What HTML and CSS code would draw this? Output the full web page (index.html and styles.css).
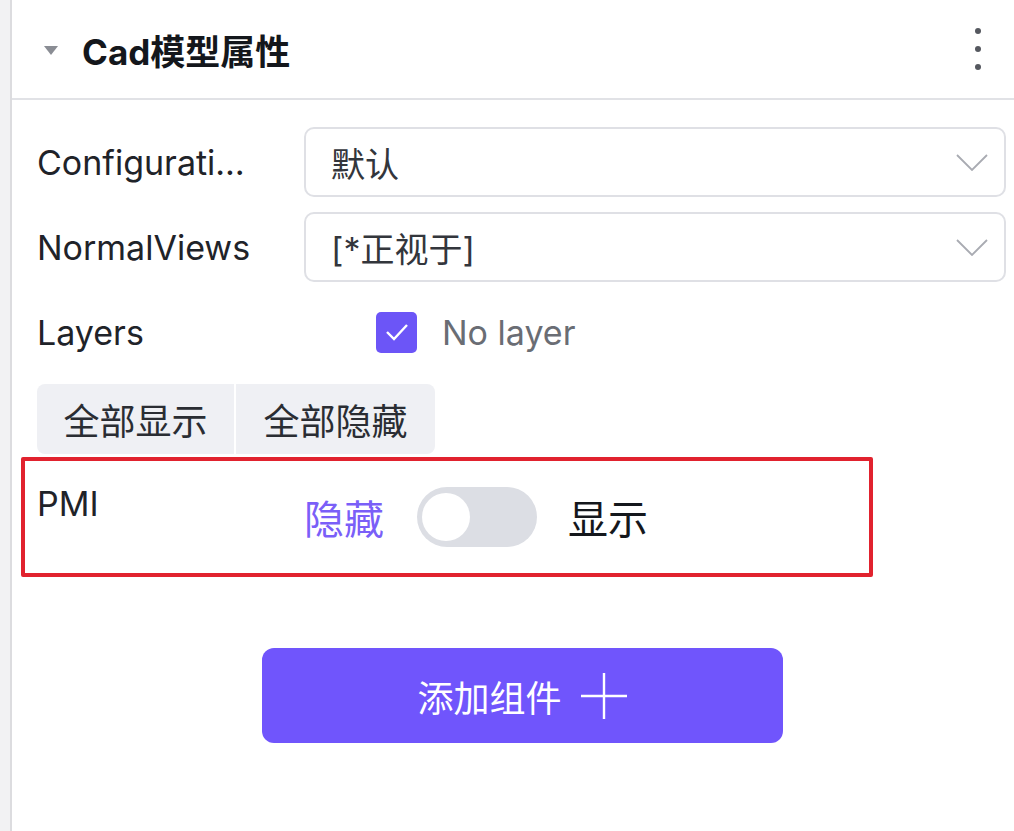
FILE: index.html
```html
<!DOCTYPE html>
<html>
<head>
<meta charset="utf-8">
<link rel="stylesheet" href="styles.css">
</head>
<body>
<div class="rail"></div>
<div class="panel">
  <div class="panel-head">
    <span class="caret"></span>
    <h1>Cad模型属性</h1>
    <span class="kebab"><i></i><i></i><i></i></span>
  </div>

  <div class="form">
    <div class="row">
      <label class="label">Configurati…</label>
      <div class="select">
        <span>默认</span>
        <svg class="chev" width="32" height="17" viewBox="0 0 32 17"><polyline points="1,1 16,16 31,1" fill="none" stroke="#a9abb2" stroke-width="1.8"/></svg>
      </div>
    </div>
    <div class="row">
      <label class="label">NormalViews</label>
      <div class="select">
        <span>[*正视于]</span>
        <svg class="chev" width="32" height="17" viewBox="0 0 32 17"><polyline points="1,1 16,16 31,1" fill="none" stroke="#a9abb2" stroke-width="1.8"/></svg>
      </div>
    </div>
    <div class="row layers">
      <label class="label">Layers</label>
      <div class="check-wrap">
        <span class="check">
          <svg width="24" height="18" viewBox="0 0 24 18"><polyline points="2,9 9,16 22,2" fill="none" stroke="#fff" stroke-width="2.4"/></svg>
        </span>
        <span class="check-text">No layer</span>
      </div>
    </div>
    <div class="btn-group">
      <button>全部显示</button>
      <button>全部隐藏</button>
    </div>
  </div>

  <div class="pmi">
    <span class="label">PMI</span>
    <div class="toggle">
      <span class="off">隐藏</span>
      <span class="switch"><span class="knob"></span></span>
      <span class="on">显示</span>
    </div>
  </div>

  <button class="add">添加组件
    <svg width="48" height="48" viewBox="0 0 48 48"><path d="M24 1v46M1 24h46" stroke="#fff" stroke-width="2.4" fill="none"/></svg>
  </button>
</div>
</body>
</html>
```

FILE: styles.css
```css
html, body {
  margin: 0;
  height: 100%;
}
body {
  display: flex;
  background: #fff;
  font-family: Inter, "Noto Sans CJK SC", sans-serif;
  color: #1f2329;
  overflow: hidden;
}
.rail {
  width: 10px;
  background: #f2f2f3;
  border-right: 2px solid #dcdcdf;
  flex: none;
}
.panel {
  flex: 1;
}

/* header */
.panel-head {
  height: 98px;
  border-bottom: 2px solid #e1e2e6;
  display: flex;
  align-items: center;
  padding-left: 32px;
  padding-right: 33px;
}
.caret {
  width: 0;
  height: 0;
  border-left: 7px solid transparent;
  border-right: 7px solid transparent;
  border-top: 9px solid #8a8d94;
  margin-right: 24px;
  margin-top: 2px;
}
h1 {
  margin: 0;
  font-size: 35px;
  font-weight: 700;
  color: #14171c;
  flex: 1;
}
.kebab {
  display: flex;
  flex-direction: column;
  gap: 12px;
}
.kebab i {
  width: 6px;
  height: 6px;
  border-radius: 50%;
  background: #55585f;
}

/* form rows */
.form {
  padding: 27px 8px 0 25px;
}
.row {
  display: flex;
  align-items: center;
  margin-bottom: 15px;
}
.label {
  width: 267px;
  flex: none;
  font-size: 34px;
  color: #1f2329;
  white-space: nowrap;
  overflow: hidden;
}
.select {
  flex: 1;
  height: 66px;
  border: 2px solid #dfe0e5;
  border-radius: 10px;
  display: flex;
  align-items: center;
  justify-content: space-between;
  padding: 0 16px 0 25px;
  font-size: 34px;
  color: #33363c;
}
.layers {
  height: 42px;
  margin-top: 29px;
  margin-bottom: 31px;
}
.check-wrap {
  display: flex;
  align-items: center;
  margin-left: 72px;
}
.check {
  width: 41px;
  height: 41px;
  border-radius: 5px;
  background: #6c55f7;
  display: flex;
  align-items: center;
  justify-content: center;
  margin-right: 25px;
}
.check-text {
  font-size: 34px;
  color: #6a6d74;
}
.btn-group {
  display: flex;
  gap: 2px;
}
.btn-group button {
  border: none;
  background: #eff0f4;
  height: 70px;
  width: 197px;
  font: 36px Inter, "Noto Sans CJK SC", sans-serif;
  color: #2a2d33;
  padding: 0;
}
.btn-group button:first-child {
  border-radius: 8px 0 0 8px;
}
.btn-group button:last-child {
  width: 199px;
  border-radius: 0 8px 8px 0;
}

/* highlighted PMI row */
.pmi {
  margin: 3px 0 0 9px;
  width: 832px;
  height: 112px;
  border: 4px solid #e1222e;
  border-radius: 2px;
  display: flex;
  padding-left: 12px;
}
.pmi .label {
  padding-top: 22px;
}
.toggle {
  display: flex;
  align-items: center;
  font-size: 40px;
}
.off {
  color: #7a5ff8;
  margin-right: 33px;
}
.on {
  color: #14171c;
  margin-left: 31px;
}
.switch {
  width: 120px;
  height: 60px;
  border-radius: 30px;
  background: #dcdee4;
  display: flex;
  align-items: center;
  padding-left: 5px;
  box-sizing: border-box;
}
.knob {
  width: 48px;
  height: 48px;
  border-radius: 50%;
  background: #fff;
}

.add {
  margin: 71px 0 0 250px;
  width: 521px;
  height: 95px;
  border: none;
  border-radius: 12px;
  background: #7055fc;
  color: #fff;
  font: 36px Inter, "Noto Sans CJK SC", sans-serif;
  display: flex;
  align-items: center;
  justify-content: center;
  gap: 18px;
  padding: 0;
}
```
